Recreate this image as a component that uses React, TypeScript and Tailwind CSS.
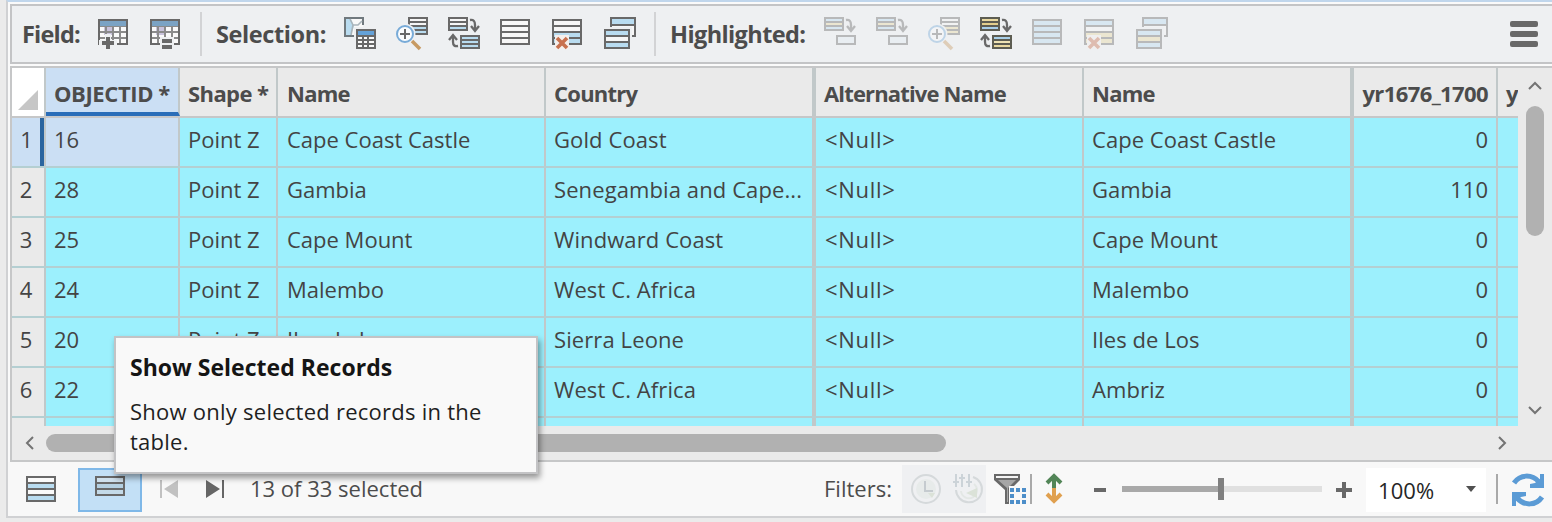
import React from "react";

const G = "#696969";
const BLUE = "#b9dcf0";
const SAND = "#e9d9a0";

function Icon({ children, faded = false, w = 32, h = 34 }: { children: React.ReactNode; faded?: boolean; w?: number; h?: number }) {
  return (
    <svg width={w} height={h} viewBox={`0 0 ${w} ${h}`} fill="none" className={faded ? "shrink-0 opacity-40" : "shrink-0"}>
      {children}
    </svg>
  );
}

function Sheet({ x, y, w, fills, step = 6, c = G }: { x: number; y: number; w: number; fills: string[]; step?: number; c?: string }) {
  const h = fills.length * step;
  return (
    <g shapeRendering="crispEdges">
      {fills.map((f, i) => (
        <rect key={i} x={x + 1} y={y + 1 + i * step} width={w} height={step} fill={f} stroke={c} strokeWidth={2} />
      ))}
      <rect x={x + 1} y={y + 1} width={w} height={h} stroke={c} strokeWidth={2} />
    </g>
  );
}

function FieldTable() {
  return (
    <g shapeRendering="crispEdges">
      <rect x={1} y={3} width={28} height={24} fill="#fafafa" stroke={G} strokeWidth={2} />
      <rect x={2} y={4} width={26} height={5} fill="#7ba3c4" />
      <rect x={6} y={10} width={9} height={8} fill="#c9c3dc" />
      <path d="M2 9.500H28M2 15H28M2 21H28M8 10V26M15 10V26M22 10V26" stroke="#8b8b8b" strokeWidth={1.4} />
    </g>
  );
}

function FieldAdd() {
  return (
    <Icon>
      <FieldTable />
      <path d="M1 23H7V17H13V23H19V30H1Z" fill="#eef0f2" />
      <path d="M10 20V32M4 26H16" stroke={G} strokeWidth={4} />
    </Icon>
  );
}

function FieldCalc() {
  return (
    <Icon>
      <FieldTable />
      <rect x={10} y={20} width={14} height={12} fill="#eef0f2" />
      <path d="M12 24H22M12 30H22" stroke={G} strokeWidth={4} />
    </Icon>
  );
}

function SelectByAttributes() {
  return (
    <Icon>
      <rect x={1} y={1} width={18} height={18} fill="#f8f8f8" />
      <path d="M2 2H7L10 9L7 18H2Z" fill={BLUE} />
      <path d="M10 19H1V1H19V8" stroke="#70797e" strokeWidth={2} />
      <path d="M6 2L9 8L14 8L18 4M9 8L7 18" stroke="#a9b4ba" strokeWidth={1.6} />
      <rect x={10} y={10} width={22} height={23} fill="#eef0f2" />
      <g shapeRendering="crispEdges">
        <rect x={13} y={13} width={18} height={18} fill="#fafafa" stroke={G} strokeWidth={2} />
        <rect x={14} y={14} width={16} height={4} fill="#65a2d8" />
        <path d="M14 19H30M14 23H30M14 27H30M19 19V30M24 19V30" stroke={G} strokeWidth={1.500} />
      </g>
    </Icon>
  );
}

function ZoomTo({ faded = false, accent = BLUE }: { faded?: boolean; accent?: string }) {
  return (
    <Icon faded={faded}>
      <Sheet x={12} y={0} w={18} fills={["#f6f6f6", "#f6f6f6", accent, accent]} step={4} />
      <circle cx={9} cy={17} r={10.500} fill="#eef0f2" />
      <path d="M15 23L24 32" stroke="#eef0f2" strokeWidth={7} />
      <path d="M16 24L24 32" stroke="#c79a62" strokeWidth={3.500} />
      <circle cx={9} cy={17} r={8} fill="#fbfcfd" stroke="#78abd8" strokeWidth={2} />
      <path d="M9 12V22M4 17H14" stroke={G} strokeWidth={2} />
    </Icon>
  );
}

function Switch({ a, b, c = G }: { a: string[]; b: string[]; c?: string }) {
  return (
    <Icon>
      <Sheet x={0} y={0} w={18} fills={a} step={4} c={c} />
      <Sheet x={12} y={18} w={18} fills={b} step={4} c={c} />
      <path d="M22 3Q27 2 27 8V13M23 9L27 14L31 9" stroke={G} strokeWidth={2.300} />
      <path d="M10 29Q5 30 5 25V19M1 23L5 18L9 23" stroke={G} strokeWidth={2.300} />
    </Icon>
  );
}

function MoveTo() {
  return (
    <Icon faded>
      <Sheet x={0} y={0} w={18} fills={[BLUE, SAND, BLUE]} step={4} />
      <Sheet x={12} y={18} w={18} fills={["#e4edf2"]} step={8} />
      <path d="M22 3Q27 2 27 8V13M23 9L27 14L31 9" stroke={G} strokeWidth={2.300} />
    </Icon>
  );
}

function SheetIcon({ fills, faded = false }: { fills: string[]; faded?: boolean }) {
  return (
    <Icon faded={faded}>
      <Sheet x={0} y={2} w={28} fills={fills} />
    </Icon>
  );
}

function DeleteRows({ faded = false, accent = BLUE }: { faded?: boolean; accent?: string }) {
  return (
    <Icon faded={faded}>
      <Sheet x={0} y={2} w={28} fills={[faded ? BLUE : "#f6f6f6", "#f6f6f6", accent, accent]} />
      <rect x={3} y={18} width={14} height={14} fill="#f5efec" />
      <path d="M5 21L15 31M15 21L5 31" stroke="#c8714f" strokeWidth={3.600} />
    </Icon>
  );
}

function CopyRows({ faded = false, middle = "#f6f6f6" }: { faded?: boolean; middle?: string }) {
  return (
    <Icon faded={faded}>
      <g shapeRendering="crispEdges">
        <rect x={7} y={1} width={24} height={18} fill="#f6f6f6" stroke={G} strokeWidth={2} />
        <rect x={8} y={2} width={22} height={5} fill={BLUE} />
        <path d="M8 8H30" stroke={G} strokeWidth={2} />
        <rect x={0} y={10} width={28} height={22} fill="#eef0f2" />
      </g>
      <Sheet x={0} y={12} w={24} fills={[BLUE, middle, BLUE]} />
    </Icon>
  );
}

const SELECTION = [
  <SelectByAttributes />,
  <ZoomTo />,
  <Switch a={["#f6f6f6", "#f6f6f6", BLUE]} b={[BLUE, BLUE, BLUE]} />,
  <SheetIcon fills={["#f6f6f6", "#f6f6f6", "#f6f6f6", "#f6f6f6"]} />,
  <DeleteRows />,
  <CopyRows />,
];

const HIGHLIGHTED = [
  <MoveTo />,
  <MoveTo />,
  <ZoomTo faded accent={SAND} />,
  <Switch a={[SAND, "#e3cf8c", "#a9cfe8"]} b={["#a9cfe8", "#eee3b4", "#e9d9a0"]} c="#5d5d52" />,
  <SheetIcon faded fills={[BLUE, BLUE, BLUE, BLUE]} />,
  <DeleteRows faded accent={SAND} />,
  <CopyRows faded middle={SAND} />,
];

function IconRow({ icons }: { icons: React.ReactNode[] }) {
  return (
    <div className="flex">
      {icons.map((icon, i) => (
        <div key={i} className="w-[52px] shrink-0">{icon}</div>
      ))}
    </div>
  );
}

function Toolbar() {
  return (
    <div className="flex h-[60px] shrink-0 items-center border-2 border-r-0 border-[#c3c4c6] bg-[#eef0f2] pl-[10px] text-[23.5px] font-bold leading-8 text-[#4c4c4c]">
      <div className="w-[76px] shrink-0 whitespace-nowrap tracking-[-0.8px]">Field:</div>
      <IconRow icons={[<FieldAdd />, <FieldCalc />]} />
      <div className="-ml-[2px] h-11 w-[2px] shrink-0 bg-[#d2d3d5]" />
      <div className="ml-[14px] w-[128px] shrink-0 whitespace-nowrap tracking-[-0.4px]">Selection:</div>
      <IconRow icons={SELECTION} />
      <div className="-ml-[2px] h-11 w-[2px] shrink-0 bg-[#d2d3d5]" />
      <div className="ml-[14px] w-[154px] shrink-0 whitespace-nowrap tracking-[-0.6px]">Highlighted:</div>
      <IconRow icons={HIGHLIGHTED} />
      <div className="ml-auto mr-[14px] flex flex-col gap-1">
        <div className="h-[6px] w-7 rounded-[2px] bg-[#696969]" />
        <div className="h-[6px] w-7 rounded-[2px] bg-[#696969]" />
        <div className="h-[6px] w-7 rounded-[2px] bg-[#696969]" />
      </div>
    </div>
  );
}

const ROWS = [
  ["16", "Cape Coast Castle", "Gold Coast", "Cape Coast Castle", "0"],
  ["28", "Gambia", "Senegambia and Cape...", "Gambia", "110"],
  ["25", "Cape Mount", "Windward Coast", "Cape Mount", "0"],
  ["24", "Malembo", "West C. Africa", "Malembo", "0"],
  ["20", "Iles de Los", "Sierra Leone", "Iles de Los", "0"],
  ["22", "Ambriz", "West C. Africa", "Ambriz", "0"],
];

const GRID = "grid grid-cols-[34px_134px_98px_268px_270px_268px_270px_144px_20px]";

function Cell({ children, className = "" }: { children?: React.ReactNode; className?: string }) {
  return <div className={`flex items-center overflow-hidden whitespace-nowrap border-r-2 border-r-[#c1c8c9] ${className}`}>{children}</div>;
}

function Table() {
  return (
    <div className="h-[358px] w-[1508px] overflow-hidden text-[22px] leading-[30px] text-[#444]">
      <div className={`${GRID} h-[50px] border-b-2 border-[#c6c7c8] bg-[#eaeaea] font-bold tracking-[-0.75px] text-[#4c4c4c]`}>
        <Cell className="justify-end bg-white pr-[6px]">
          <svg width="20" height="20" viewBox="0 0 20 20" className="mt-[16px]"><path d="M20 0V20H0Z" fill="#c6c6c6" /></svg>
        </Cell>
        <Cell className="border-b-4 border-b-[#2a6db8] bg-[#cbdff4] pl-2 pt-[6px] tracking-[-0.4px]">OBJECTID *</Cell>
        <Cell className="pl-2 pt-[2px] tracking-[-0.6px]">Shape *</Cell>
        <Cell className="pl-[9px] pt-[2px]">Name</Cell>
        <Cell className="border-r-4 pl-2 pt-[2px]">Country</Cell>
        <Cell className="pl-2 pt-[2px] tracking-[-0.85px]">Alternative Name</Cell>
        <Cell className="border-r-4 pl-2 pt-[2px]">Name</Cell>
        <Cell className="justify-end pr-2 pt-[2px] tracking-[-0.6px]">yr1676_1700</Cell>
        <div className="flex items-center pl-2 pt-[2px]">y</div>
      </div>
      {ROWS.map((r, i) => (
        <div key={i} className={`${GRID} h-[50px] border-b-2 border-[#b4cfd2] bg-[#9cf0fd]`}>
          {i === 0 ? (
            <Cell className="bg-[#cbdff4]"><span className="flex h-12 w-8 items-center justify-center border-r-4 border-[#2a659f] pl-[1px] pb-[6px]">1</span></Cell>
          ) : (
            <Cell className="justify-center bg-[#eaeaea] pr-[4px] pb-[6px]">{i + 1}</Cell>
          )}
          <Cell className={i === 0 ? "bg-[#cbdff4] pl-2 pb-[6px]" : "pl-2 pb-[6px]"}>{r[0]}</Cell>
          <Cell className="pl-2 pb-[6px]">Point Z</Cell>
          <Cell className="pl-[9px] pb-[6px]">{r[1]}</Cell>
          <Cell className="border-r-4 pl-2 pb-[6px] tracking-[0.1px]">{r[2]}</Cell>
          <Cell className="pl-[9px] pb-[6px] tracking-[0.7px]">&lt;Null&gt;</Cell>
          <Cell className="border-r-4 pl-2 pb-[6px] tracking-[0.05px]">{r[3]}</Cell>
          <Cell className="justify-end pr-2 pb-[6px]">{r[4]}</Cell>
          <div />
        </div>
      ))}
      <div className={`${GRID} h-[8px] bg-[#9cf0fd]`}>
        <Cell className="bg-[#eaeaea]" />
        <Cell />
        <Cell />
        <Cell />
        <Cell className="border-r-4" />
        <Cell />
        <Cell className="border-r-4" />
        <Cell />
        <div />
      </div>
    </div>
  );
}

function Chevron({ d }: { d: string }) {
  return <svg width="16" height="16" viewBox="0 0 16 16" fill="none" className="shrink-0"><path d={d} stroke="#747474" strokeWidth="2" /></svg>;
}

function Status() {
  return (
    <div className="flex h-[54px] shrink-0 items-center bg-[#f8f8f8] pl-[18px] text-[22px] leading-[30px] text-[#4c4c4c]">
      <div className="mr-[22px] mt-[2px] w-[30px]">
        <Icon w={30} h={28}><Sheet x={0} y={0} w={28} fills={["#fafafa", BLUE, "#fafafa", BLUE]} /></Icon>
      </div>
      <div className="mt-[2px] flex h-11 w-16 shrink-0 justify-center border-2 border-[#7fb8e8] bg-[#c3e0f6] pt-[6px]">
        <Icon w={30} h={22}><Sheet x={0} y={0} w={28} fills={["#cfe0ec", "#b5d0e1", "#c4dae8"]} /></Icon>
      </div>
      <svg width="18" height="18" viewBox="0 0 18 18" className="ml-[18px] shrink-0"><path d="M0 0H2V18H0ZM18 0V18L4 9Z" fill="#c1c1c1" /></svg>
      <svg width="18" height="18" viewBox="0 0 18 18" className="ml-[28px] shrink-0"><path d="M16 0H18V18H16ZM0 0V18L14 9Z" fill="#666" /></svg>
      <div className="mb-[2px] ml-[26px] w-[574px] shrink-0 whitespace-nowrap">13 of 33 selected</div>
      <div className="mb-[2px] w-[78px] shrink-0 whitespace-nowrap">Filters:</div>
      <div className="flex h-12 w-[84px] shrink-0 items-center gap-[10px] bg-[#eff0f2] pl-[8px]">
        <svg width="32" height="32" viewBox="0 0 32 32" fill="none" stroke="#d5d9db" strokeWidth="2">
          <circle cx="16" cy="16" r="14" />
          <circle cx="16" cy="16" r="10" fill="#e7ebea" stroke="none" />
          <path d="M15 8V18H23" stroke="#c5cbcf" />
          <path d="M18 20H25L22 25Z" fill="#dbe2d8" stroke="none" />
        </svg>
        <svg width="32" height="32" viewBox="0 0 32 32" fill="none" stroke="#d5d9db" strokeWidth="2">
          <path d="M4 17A13 13 0 1 0 21 4" />
          <path d="M9 18A8 8 0 1 0 22 11" stroke="#e3e7e5" />
          <path d="M4 1V14M10 1V14M17 1V14M1 9H7M7 5H13M14 9H20" stroke="#ccd3d8" />
          <path d="M14 20L25 15V25Z" fill="#dbe2d8" stroke="none" />
        </svg>
      </div>
      <svg width="34" height="32" viewBox="0 0 34 32" className="ml-2 shrink-0">
        <path d="M0 1H26V7L16 17V31H11V17L0 7Z" fill={G} />
        <path d="M2 3H24V5H2Z" fill="#f5f5f5" />
        <path d="M4 7H22L14 15V29H13V15Z" fill="#a6a6a6" />
        <path d="M15 13H34V32H15Z" fill="#f8f8f8" />
        <g fill="#4d8ec9" shapeRendering="crispEdges">
          <path d="M16 15h4v4h-4zM22 15h4v4h-4zM28 15h4v4h-4zM16 21h4v4h-4zM28 21h4v4h-4zM16 27h4v4h-4zM22 27h4v4h-4zM28 27h4v4h-4z" />
        </g>
      </svg>
      <div className="ml-[2px] h-[30px] w-[2px] shrink-0 bg-[#a9a9a9]" />
      <svg width="18" height="32" viewBox="0 0 18 32" fill="none" className="-mt-[2px] ml-[13px] shrink-0">
        <path d="M9 4V16M2 11L9 4L16 11" stroke="#528557" strokeWidth="4" />
        <path d="M9 16V28M2 22L9 29L16 22" stroke="#e0a04f" strokeWidth="4" />
      </svg>
      <div className="ml-[31px] mt-[2px] h-1 w-3 shrink-0 bg-[#696969]" />
      <div className="ml-4 flex h-[22px] w-[200px] shrink-0 items-center">
        <div className="h-[6px] w-24 bg-[#a9a9a9]" />
        <div className="h-[22px] w-[6px] bg-[#808080]" />
        <div className="h-[6px] w-[98px] bg-[#e0e0e0]" />
      </div>
      <svg width="16" height="16" viewBox="0 0 16 16" className="ml-[14px] mt-[2px] shrink-0"><path d="M6 0H10V6H16V10H10V16H6V10H0V6H6Z" fill="#696969" /></svg>
      <div className="ml-[14px] mt-[2px] flex h-11 w-[120px] shrink-0 items-center bg-white pl-[12px] text-[#262626]">
        <div className="w-[88px] tracking-[0.1px]">100%</div>
        <svg width="10" height="6" viewBox="0 0 10 6" className="-mt-[2px]"><path d="M0 0H10L5 6Z" fill="#505050" /></svg>
      </div>
      <div className="ml-[10px] h-[30px] w-[2px] shrink-0 bg-[#a9a9a9]" />
      <svg width="34" height="34" viewBox="0 0 34 34" fill="none" className="ml-[13px] mt-[2px] shrink-0">
        <path d="M3 10C9 1 21 1 28 9" stroke="#5b9bd5" strokeWidth="5" />
        <path d="M33 1V15H19V11L24 10L29 6V1Z" fill="#5b9bd5" />
        <path d="M31 24C25 33 13 33 6 25" stroke="#5b9bd5" strokeWidth="5" />
        <path d="M1 33V19H15V23L10 24L5 28V33Z" fill="#5b9bd5" />
      </svg>
    </div>
  );
}

export default function App() {
  return (
    <div className="relative flex h-[522px] w-[1552px] flex-col overflow-hidden bg-[#ebebeb] font-['Open_Sans',sans-serif]">
      <div className="ml-[6px] flex h-[518px] flex-col overflow-hidden border-b-2 border-l-2 border-[#d0d1d3] border-t-2 border-t-[#c0d6ec] bg-[#fafafa] pt-[2px]">
        <div className="ml-[2px] shrink-0"><Toolbar /></div>
        <div className="ml-[2px] mt-[2px] flex h-[396px] shrink-0 flex-col border-2 border-r-0 border-[#c6c7c8] bg-[#eaeaea]">
          <div className="flex">
            <div className="w-[1506px] shrink-0 overflow-hidden"><Table /></div>
            <div className="flex h-[358px] w-[34px] flex-col items-center pb-2 pt-[10px]">
              <Chevron d="M2 11L8 5L14 11" />
              <div className="mt-3 h-[130px] w-[18px] rounded-full bg-[#b1b1b1]" />
              <div className="mt-auto"><Chevron d="M2 5L8 11L14 5" /></div>
            </div>
          </div>
          <div className="flex h-[34px] items-center">
            <div className="ml-[10px]"><Chevron d="M11 2L5 8L11 14" /></div>
            <div className="ml-2 h-[18px] w-[900px] rounded-full bg-[#b1b1b1]" />
            <div className="ml-[548px]"><Chevron d="M5 2L11 8L5 14" /></div>
          </div>
        </div>
        <Status />
      </div>
      <div className="absolute left-[114px] top-[336px] h-[138px] w-[424px] border-2 border-[#c3c3c5] bg-[#f9f9f9] pl-[14px] pt-[14px] text-[22px] leading-[30px] text-[#1f1f1f] shadow-[2px_4px_6px_rgba(0,0,0,0.4)]">
        <div className="text-[23px] font-bold tracking-[0.02px] text-[#151515]">Show Selected Records</div>
        <div className="mt-[14px] tracking-[0.25px]">Show only selected records in the<br />table.</div>
      </div>
    </div>
  );
}
